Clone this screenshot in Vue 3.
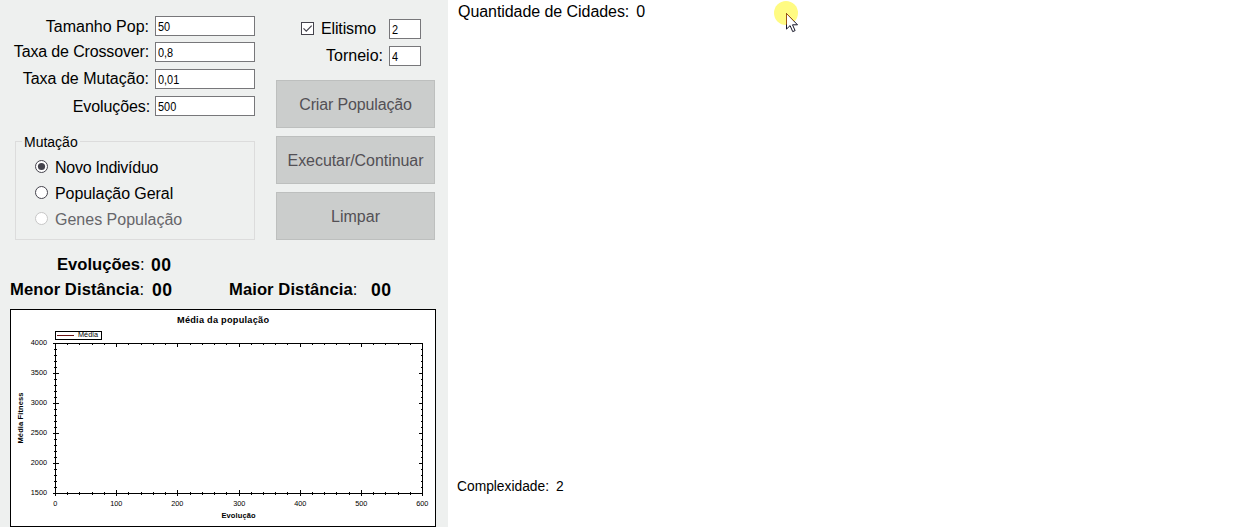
<script setup>
import { ref } from 'vue'

const fields = ref([
  { label: 'Tamanho Pop:', value: '50', cls: 'pop' },
  { label: 'Taxa de Crossover:', value: '0,8', cls: 'cross' },
  { label: 'Taxa de Mutação:', value: '0,01', cls: 'mut' },
  { label: 'Evoluções:', value: '500', cls: 'evo' },
])
const modes = [
  { label: 'Novo Indivíduo', checked: true, cls: 'novo' },
  { label: 'População Geral', cls: 'geral' },
  { label: 'Genes População', disabled: true, cls: 'genes' },
]
const buttons = [
  { label: 'Criar População', w: 'b1' },
  { label: 'Executar/Continuar', w: 'b2' },
  { label: 'Limpar', w: 'b3' },
]

// Chart geometry, relative to the chart frame
const L = 45, R = 412, T = 34, B = 184
const xTicks = Array.from({ length: 31 }, (_, i) => ({
  p: Math.round(L + (i * (R - L)) / 30), major: i % 5 === 0, label: i * 20,
}))
const yTicks = Array.from({ length: 26 }, (_, i) => ({
  p: B - i * 6, major: i % 5 === 0, label: 1500 + i * 100,
}))
const ticksPath = [
  ...xTicks.map(t => `M${t.p + 0.5} ${B - (t.major ? 3 : 1)}v${t.major ? 6 : 3}M${t.p + 0.5} ${T}v${t.major ? 4 : 2}`),
  ...yTicks.map(t => `M${L - (t.major ? 2 : 1)} ${t.p + 0.5}h${t.major ? 6 : 3}M${R + 1} ${t.p + 0.5}h-${t.major ? 4 : 2}`),
].join('')
const xMajor = xTicks.filter(t => t.major)
const yMajor = yTicks.filter(t => t.major)
</script>

<template>
  <main class="window">
    <aside class="panel">
      <div class="top">
        <section class="left">
          <div v-for="f in fields" :key="f.label" class="row" :class="f.cls">
            <span class="label">{{ f.label }}</span>
            <span class="input"><b>{{ f.value }}</b></span>
          </div>
          <div class="group">
            <span class="legend">Mutação</span>
            <div v-for="m in modes" :key="m.label" class="mode" :class="[m.cls, { disabled: m.disabled }]">
              <svg width="13" height="13" viewBox="0 0 13 13">
                <circle cx="6.5" cy="6.5" r="6" fill="#fff" stroke="currentColor" />
                <circle v-if="m.checked" cx="6.5" cy="6.5" r="3.6" fill="currentColor" />
              </svg>
              <span>{{ m.label }}</span>
            </div>
          </div>
        </section>
        <section class="right">
          <div class="opt first">
            <svg width="13" height="13" viewBox="0 0 13 13">
              <rect x=".5" y=".5" width="12" height="12" fill="#fff" stroke="#44434c" />
              <path d="M2.5 6.3l2.8 2.9 5.4-5.6" fill="none" stroke="#44434c" stroke-width="1.2" />
            </svg>
            <span class="label elit">Elitismo</span>
            <span class="input small"><b>2</b></span>
          </div>
          <div class="opt">
            <span class="label torn">Torneio:</span>
            <span class="input small"><b>4</b></span>
          </div>
          <div class="buttons">
            <div v-for="b in buttons" :key="b.label" class="button"><span :class="b.w">{{ b.label }}</span></div>
          </div>
        </section>
      </div>

      <div class="stats">
        <span class="s1">Evoluções<i>:</i></span><span class="n1">00</span>
      </div>
      <div class="stats second">
        <span class="s2">Menor Distância<i>:</i></span><span class="n2">00</span>
        <span class="s3">Maior Distância<i>:</i></span><span class="n3">00</span>
      </div>

      <svg class="chart" width="426" height="218" viewBox="0 0 426 218">
        <rect x=".5" y=".5" width="425" height="217" fill="#fff" stroke="#000" />
        <text x="167" y="14" textLength="92" class="title">Média da população</text>
        <rect x="45.5" y="22.5" width="46" height="8" rx="1" fill="#fff" stroke="#000" />
        <path d="M47 26.5h17" stroke="#6b1414" />
        <text x="68" y="28.4" textLength="20" class="tick">Média</text>
        <rect :x="L + 0.5" :y="T + 0.5" :width="R - L" :height="B - T" fill="none" stroke="#000" />
        <path :d="ticksPath" stroke="#000" fill="none" />
        <text v-for="t in xMajor" :key="'x' + t.p" :x="t.p + 0.3" y="197" text-anchor="middle" class="tick">{{ t.label }}</text>
        <text v-for="t in yMajor" :key="'y' + t.p" x="37" :y="t.p + 2" text-anchor="end" class="tick">{{ t.label }}</text>
        <text x="211.5" y="208.5" textLength="34" class="axis">Evolução</text>
        <text transform="translate(12.5 134.5) rotate(-90)" textLength="51" class="axis">Média Fitness</text>
      </svg>
    </aside>

    <section class="canvas">
      <div class="line"><span class="q1">Quantidade de Cidades:</span><span>0</span></div>
      <div class="line low"><span class="c1">Complexidade:</span><span>2</span></div>
      <svg class="pointer" width="30" height="34" viewBox="0 0 30 34">
        <circle cx="12" cy="13" r="12" fill="#fffb82" />
        <path d="M12.5 13.5v15.6l3.6-3.5 2.6 6 2.4-1-2.6-5.8h5z" fill="#fff" stroke="#161628" />
        <path d="M12.5 13.5v11M12.5 13.5l7.6 7.6" fill="none" stroke="#9a5514" />
      </svg>
    </section>
  </main>
</template>

<style>
html, body { background: #fff; overflow: hidden; }
</style>

<style scoped>
.window { display: flex; width: 1246px; height: 527px; font: 16px/20px "Liberation Sans", Arial, sans-serif; color: #000; white-space: nowrap; overflow: hidden; }
.panel { width: 448px; height: 527px; box-sizing: border-box; background: #eef0ef; }
.top { display: flex; height: 240px; }
.left { width: 255px; padding-top: 16px; box-sizing: border-box; }
.row { display: flex; justify-content: flex-end; height: 20px; margin-bottom: 7px; }
.row .label { margin-right: 6px; }
.row.pop { margin-bottom: 6px; }
.row.pop .label { line-height: 22px; }
.row.cross .label { letter-spacing: -0.15px; }
.row.evo { margin-bottom: 25px; }
.row.evo .label { margin-right: 5px; line-height: 22px; letter-spacing: -0.1px; }
.input { display: block; box-sizing: border-box; width: 100px; height: 20px; border: 1px solid #77777a; background: #fff; padding-left: 2px; font-size: 13px; line-height: 19px; }
.input b { display: inline-block; font-weight: 400; transform: scaleX(.84); transform-origin: 0 50%; }
.input.small { width: 32px; }
.group { position: relative; box-sizing: border-box; width: 240px; height: 99px; margin-left: 15px; border: 1px solid #dcdcdc; padding: 15px 0 0 19px; }
.legend { position: absolute; left: 6px; top: -10px; padding: 0 2px; background: #eef0ef; font-size: 14px; line-height: 20px; }
.mode { display: flex; align-items: flex-start; height: 20px; margin-bottom: 6px; color: #44434c; }
.mode svg { margin: 3px 7px 0 0; }
.mode span { color: #000; line-height: 22px; }
.mode.novo span { letter-spacing: -0.25px; }
.mode.geral span { letter-spacing: -0.07px; }
.mode.disabled { color: #c6c6c6; }
.mode.disabled span { color: #66666a; }
.right { width: 159px; margin-left: 21px; padding-top: 19px; }
.opt { display: flex; align-items: center; justify-content: flex-end; height: 20px; margin-bottom: 14px; padding-right: 14px; }
.opt.first { margin-bottom: 7px; }
.opt svg { margin: -1px 7px 0 0; }
.elit { margin-right: 13px; letter-spacing: -0.12px; }
.torn { margin-right: 6px; line-height: 22px; }
.buttons { display: grid; gap: 8px; }
.button { box-sizing: border-box; height: 48px; border: 1px solid #bdbfbe; background: #cbcdcc; color: #535055; display: flex; align-items: center; justify-content: center; }
.button span { padding-top: 1px; line-height: 21px; }
.b1 { letter-spacing: -0.15px; }
.b2 { letter-spacing: -0.06px; }
.stats { display: flex; height: 20px; margin-top: 15px; padding-left: 57px; font-weight: 700; font-size: 16.6px; }
.stats.second { margin-top: 5px; padding-left: 10px; }
.stats i { font-style: normal; font-weight: 400; }
.s1 { width: 94px; }
.s2 { width: 142px; letter-spacing: .08px; }
.n2 { width: 77px; }
.s3 { width: 142px; letter-spacing: .08px; }
.n1, .n2, .n3 { font-size: 17.6px; letter-spacing: .4px; line-height: 21px; }
.chart { display: block; margin: 9px 0 0 10px; }
.chart rect, .chart path { shape-rendering: crispEdges; }
.title { font-size: 9.2px; font-weight: 700; }
.axis { font-size: 7.5px; font-weight: 700; }
.tick { font-size: 7.3px; }
.canvas { position: relative; flex: 1; display: flex; flex-direction: column; justify-content: space-between; padding: 2px 0 30px 9px; box-sizing: border-box; height: 527px; }
.line { display: flex; gap: 7px; }
.line:first-child { padding-left: 1px; }
.q1 { letter-spacing: -0.06px; }
.line.low { font-size: 13.8px; }
.pointer { position: absolute; left: 326px; top: 0; }
</style>
